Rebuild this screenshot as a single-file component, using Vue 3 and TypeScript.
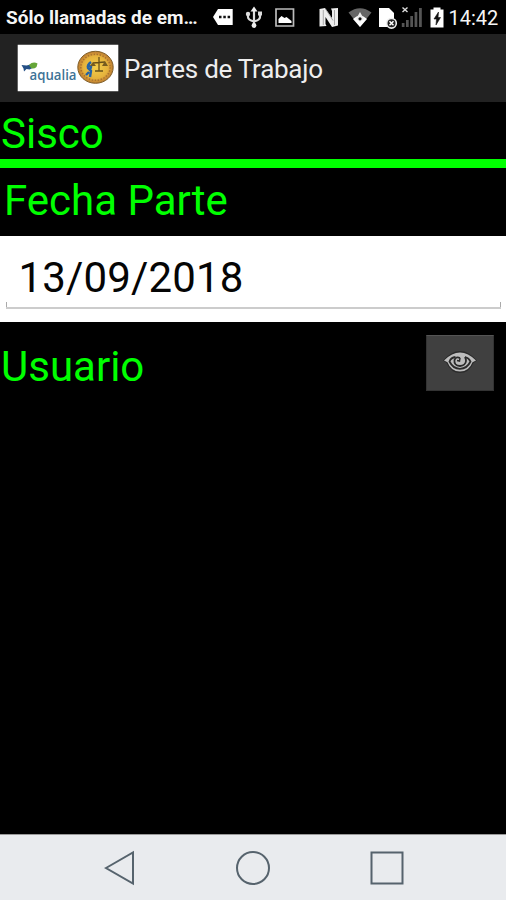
<script setup lang="ts">
import { ref } from 'vue'

const carrier = ref('Sólo llamadas de em…')
const time = ref('14:42')
const title = ref('Partes de Trabajo')
const date = ref('13/09/2018')
</script>

<template>
  <div class="screen">
    <header class="status">
      <span class="carrier">{{ carrier }}</span>
      <div class="notifications">
        <svg width="21" height="34" viewBox="213 0 21 34">
          <path d="M213 17l5-8h14.700v16H218z" fill="#fff" />
          <path d="M219 15.700h2.500v2.500H219zM223.300 15.700h2.500v2.500h-2.500zM227.600 15.700h2.500v2.500h-2.500z" fill="#111" />
        </svg>
        <svg width="18" height="34" viewBox="245 0 18 34">
          <path d="M254 9v17M248 14v3q0 3 6 4.500q6-1.500 6-4.500v-3" fill="none" stroke="#ddd" stroke-width="2.200" />
          <path d="M254 6.500l3.500 5h-7z" fill="#eee" />
          <circle cx="248" cy="14" r="2.200" fill="#ddd" />
          <path d="M258 11.500h4v4h-4z" fill="#ddd" />
          <circle cx="254" cy="25.500" r="2.400" fill="#eee" />
        </svg>
        <svg width="20" height="34" viewBox="275 0 20 34">
          <path d="M276 9h17.500v17H276z" fill="none" stroke="#bbb" stroke-width="1.700" />
          <path d="M278.500 23v-4l3-3 3 2 2-1 5 4v2z" fill="#fff" />
        </svg>
      </div>
      <div class="system">
        <svg width="20" height="34" viewBox="319 0 20 34">
          <path d="M319.500 9l5.500-1 7 10V11l-1-2.500 7-.5v17.500l-6 1.500-6.500-10V24l1 2-7 .5z" fill="#eee" />
          <path d="M323.300 10v15M325.500 9l7.500 11.500M334.500 10v15" stroke="#999" stroke-width=".8" fill="none" />
        </svg>
        <svg width="25" height="34" viewBox="348 0 25 34">
          <path d="M348.500 12.500Q360 4 371.500 12.500L360 27z" fill="#666" />
          <path d="M353 19q7-7 14 0l-7 8z" fill="#fff" />
          <path d="M360 12l4 7-4 3-4-3z" fill="#eee" />
          <circle cx="360" cy="18.800" r="1.600" fill="#111" />
        </svg>
        <svg width="20" height="34" viewBox="378 0 20 34">
          <path d="M379 8h10l5 5v14h-15z" fill="#fff" />
          <circle cx="391.500" cy="23.300" r="4.800" fill="#222" stroke="#eee" stroke-width="1.600" />
          <path d="M389.500 21.300l4 4M393.500 21.300l-4 4" stroke="#fff" stroke-width="1.500" />
        </svg>
        <svg width="22" height="34" viewBox="401 0 22 34">
          <path d="M401.800 23h2.700v4h-2.700zM406 20h2.700v7H406zM410.300 16h2.700v11h-2.700zM414.600 12h2.700v15h-2.700zM419 8h2.800v19H419z" fill="#555" />
          <path d="M402.500 7.500l5 4.500M407.500 7.500l-5 4.500" stroke="#ddd" stroke-width="1.400" />
        </svg>
        <svg width="14" height="34" viewBox="430 0 14 34">
          <path d="M430.500 9.500h3V7.500h7v2h3V27.500h-13z" fill="#fff" />
          <path d="M438.500 12l-4.500 7h2.500l-.5 6 4.500-7.500H438z" fill="#111" stroke="#111" stroke-width=".6" />
        </svg>
      </div>
      <span class="time">{{ time }}</span>
    </header>

    <div class="app-bar">
      <svg class="logo" width="102" height="48" viewBox="0 0 102 48">
        <defs>
          <radialGradient id="seal">
            <stop offset="0" stop-color="#f2cf4c" />
            <stop offset=".7" stop-color="#e5b23c" />
            <stop offset="1" stop-color="#bc7a30" />
          </radialGradient>
        </defs>
        <path d="M.7.700h100.600v46.600H.7z" fill="#fff" />
        <path d="M4.500 21l5 .5 4-1 3 3-4 2-3-.5-2.500 2.500-.5-3z" fill="#234f85" />
        <path d="M12 21q4-4 8.500-1.500l-1 3.500q-3 2.500-5.500 1z" fill="#65a638" />
        <text x="12.500" y="35.500" class="brand" textLength="47" lengthAdjust="spacingAndGlyphs">aqualia</text>
        <ellipse cx="78.500" cy="23.300" rx="17.700" ry="16" fill="url(#seal)" stroke="#80602a" stroke-width="1" />
        <ellipse cx="78.500" cy="23.300" rx="14.700" ry="13" fill="none" stroke="#a97130" stroke-width="1.500" stroke-dasharray="1.500 1.500" />
        <path d="M74 18q-4 3-3 6l3 3-1 6M71 21l3 2-1 3M72 28l-3 3" fill="none" stroke="#2463a5" stroke-width="2.400" />
        <path d="M82 13v14M76 19l12-1M78 27h8" fill="none" stroke="#66501a" stroke-width="1.300" />
        <path d="M76 18l3 4h-6zM88 17l3 5h-6z" fill="#765c20" />
      </svg>
      <h1 class="title">{{ title }}</h1>
    </div>

    <main class="form">
      <div class="section"><span class="label sisco">Sisco</span></div>
      <div class="date-label"><span class="label">Fecha Parte</span></div>
      <div class="date-panel">
        <div class="date-field"><span class="date">{{ date }}</span></div>
      </div>
      <div class="user-row">
        <span class="label usuario">Usuario</span>
        <button class="view" type="button" aria-label="Ver usuario">
          <svg width="34" height="24" viewBox="0 0 34 24">
            <path d="M0 10.500Q8 1 17 1t17 9.500l-3.500 2.500Q26 23 17 23T3.500 13z" fill="#2b2b2b" />
            <path d="M1 10.500Q9 2.500 17 2.500t16 8l-3.500 1.700Q26 21.500 17 21.500T4.500 12.200z" fill="#bdbdbd" />
            <path d="M12.500 7Q8 7.500 6.500 11.500 10 18.800 17 18.800t10.500-7.300Q26 8 22 7" fill="none" stroke="#2b2b2b" stroke-width="1.800" />
            <path d="M17 8q-4-2-5.500 2-.8 5.500 5.500 6 5.500-.5 6-5 0-2-1-4" fill="none" stroke="#2b2b2b" stroke-width="1.800" />
            <path d="M14 10.500l2.500.5.500-3" fill="none" stroke="#2b2b2b" stroke-width="1.500" />
          </svg>
        </button>
      </div>
    </main>

    <nav class="nav">
      <svg width="32" height="36" viewBox="0 0 32 36"><path d="M2 18L29 2.500v31z" /></svg>
      <svg width="36" height="36" viewBox="0 0 36 36"><circle cx="18" cy="18" r="16" /></svg>
      <svg width="36" height="36" viewBox="0 0 36 36"><path d="M2.500 2.500h31v31h-31z" /></svg>
    </nav>
  </div>
</template>

<style>
body {
  margin: 0;
  background: #000;
}
</style>

<style scoped>
.screen {
  width: 506px;
  height: 900px;
  display: flex;
  flex-direction: column;
  background: #000;
  overflow: hidden;
  font-family: Roboto, "Liberation Sans", sans-serif;
  white-space: nowrap;
}
svg {
  display: block;
  flex: none;
}
.status {
  height: 34px;
  flex: none;
  display: flex;
  color: #f5f5f5;
  line-height: 36px;
}
.carrier {
  width: 206.500px;
  padding-left: 6px;
  font-size: 19px;
  font-weight: 700;
}
.notifications {
  display: flex;
  gap: 11.500px;
  margin-right: 24px;
}
.system {
  display: flex;
  gap: 5px;
}
.system svg:nth-child(2) {
  margin-left: 4px;
}
.system svg:nth-child(4) {
  margin-left: -2px;
}
.system svg:nth-child(5) {
  margin-left: 2px;
}
.time {
  margin-left: 5px;
  font-size: 20px;
}
.app-bar {
  height: 68px;
  flex: none;
  box-sizing: border-box;
  display: flex;
  align-items: center;
  padding: 0 0 1px 17px;
  background: #222;
}
.brand {
  font: 600 15px "Open Sans", sans-serif;
  fill: #3d7296;
}
.title {
  margin: 0 0 0 5px;
  padding-top: 3px;
  font-size: 26px;
  font-weight: 400;
  line-height: 34px;
  letter-spacing: -0.26px;
  color: #eee;
}
.form {
  flex: 1;
}
.label {
  padding-left: 1px;
  color: #0f0;
  font-size: 42px;
  line-height: 50px;
}
.section {
  height: 57px;
  display: flex;
  align-items: center;
  border-bottom: 9px solid #0f0;
}
.section .sisco {
  padding-top: 6px;
}
.date-label {
  height: 68px;
  box-sizing: border-box;
  display: flex;
  align-items: center;
  padding: 0 0 2px 3px;
}
.date-panel {
  height: 86px;
  box-sizing: border-box;
  padding: 8px 5px 13px 6px;
  background: #fff;
}
.date-field {
  height: 65px;
  box-sizing: border-box;
  padding-left: 12.500px;
  border-bottom: 2px solid #ccc;
  background: linear-gradient(#aaa, #aaa) left bottom / 1px 5px no-repeat, linear-gradient(#aaa, #aaa) right bottom / 1px 5px no-repeat;
}
.date {
  font-size: 42px;
  line-height: 67px;
  letter-spacing: 0.15px;
  color: #050505;
}
.user-row {
  height: 82px;
  display: flex;
  align-items: center;
  justify-content: space-between;
  padding-right: 12px;
}
.usuario {
  padding-top: 8px;
}
.view {
  width: 68px;
  height: 56px;
  padding: 0 0 2px;
  display: flex;
  align-items: center;
  justify-content: center;
  border: 1px solid #333;
  border-top-color: #555;
  background: #404040;
}
.nav {
  height: 66px;
  flex: none;
  box-sizing: border-box;
  display: flex;
  align-items: center;
  justify-content: space-between;
  padding: 0 101px 0 104px;
  border-top: 1px solid #999;
  background: #e9ebee;
}
.nav svg {
  fill: none;
  stroke: #56636d;
  stroke-width: 2;
}
</style>
